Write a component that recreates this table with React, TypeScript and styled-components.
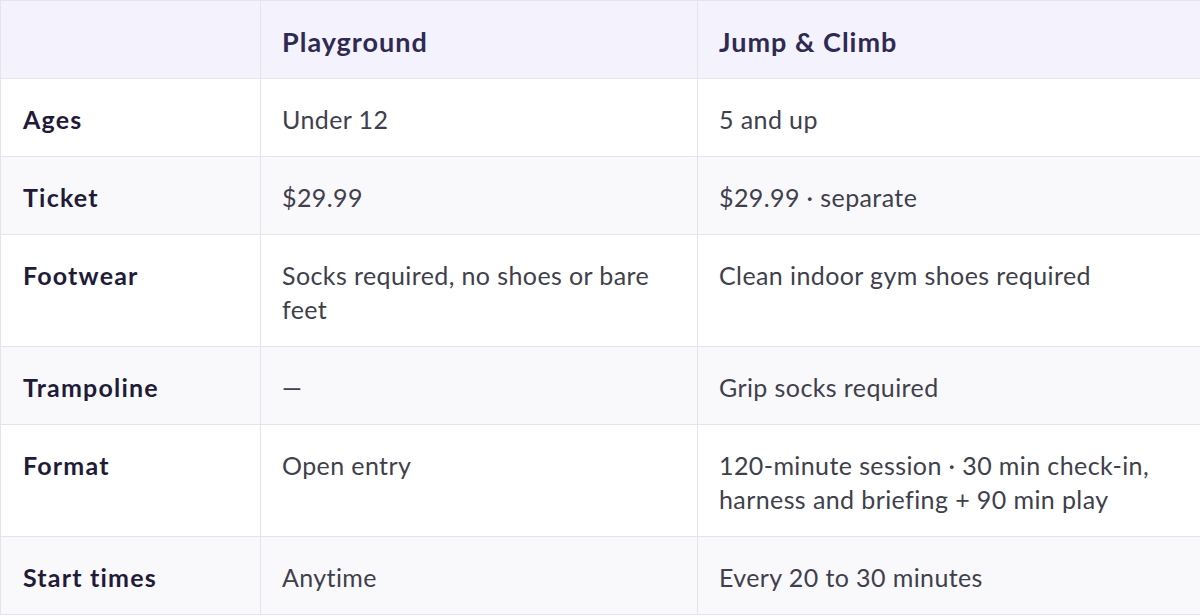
import * as React from 'react';
import styled, { createGlobalStyle } from 'styled-components';

const GlobalStyle = createGlobalStyle`
  html, body {
    margin: 0;
    padding: 0;
    background: #ffffff;
  }

  body {
    font-family: Lato, 'Noto Sans', sans-serif;
  }
`;

interface Row {
  label: string;
  playground: string;
  jump: string;
}

const rows: Row[] = [
  { label: 'Ages', playground: 'Under 12', jump: '5 and up' },
  { label: 'Ticket', playground: '$29.99', jump: '$29.99 \u00b7 separate' },
  {
    label: 'Footwear',
    playground: 'Socks required, no shoes or bare feet',
    jump: 'Clean indoor gym shoes required',
  },
  { label: 'Trampoline', playground: '\u2014', jump: 'Grip socks required' },
  {
    label: 'Format',
    playground: 'Open entry',
    jump: '120-minute session \u00b7 30 min check-in, harness and briefing + 90 min play',
  },
  { label: 'Start times', playground: 'Anytime', jump: 'Every 20 to 30 minutes' },
];

const Table = styled.table`
  border-collapse: collapse;
  border: 1px solid #e4e4ec;
  table-layout: fixed;
  width: 1200px;
`;

const Col = styled.col<{ $width: number }>`
  width: ${({ $width }) => $width}px;
`;

const HeadRow = styled.tr`
  background-color: #f4f3fd;
`;

const BodyRow = styled.tr<{ $shaded: boolean }>`
  background-color: ${({ $shaded }) => ($shaded ? '#f9f9fc' : '#ffffff')};
`;

const HeadCell = styled.th`
  border: 1px solid #e4e4ec;
  color: #2f2a52;
  font-size: 27px;
  font-weight: 700;
  letter-spacing: 1px;
  line-height: 34px;
  padding: 24px 22px 19px 21px;
  text-align: left;
  vertical-align: top;
`;

const LabelCell = styled.th`
  border: 1px solid #e4e4ec;
  color: #1f1b38;
  font-size: 25px;
  font-weight: 700;
  letter-spacing: 1.2px;
  line-height: 34px;
  padding: 23px 22px 20px 22px;
  text-align: left;
  vertical-align: top;
`;

const Cell = styled.td`
  border: 1px solid #e4e4ec;
  color: #40404c;
  font-size: 25px;
  font-weight: 400;
  letter-spacing: 0.4px;
  line-height: 34px;
  padding: 23px 22px 20px 21px;
  text-align: left;
  vertical-align: top;
`;

export default function App(): JSX.Element {
  return (
    <>
      <GlobalStyle />
      <Table>
        <colgroup>
          <Col $width={260} />
          <Col $width={437} />
          <Col $width={503} />
        </colgroup>
        <thead>
          <HeadRow>
            <HeadCell />
            <HeadCell>Playground</HeadCell>
            <HeadCell>Jump &amp; Climb</HeadCell>
          </HeadRow>
        </thead>
        <tbody>
          {rows.map((row, i) => (
            <BodyRow key={row.label} $shaded={i % 2 === 1}>
              <LabelCell scope="row">{row.label}</LabelCell>
              <Cell>{row.playground}</Cell>
              <Cell>{row.jump}</Cell>
            </BodyRow>
          ))}
        </tbody>
      </Table>
    </>
  );
}
